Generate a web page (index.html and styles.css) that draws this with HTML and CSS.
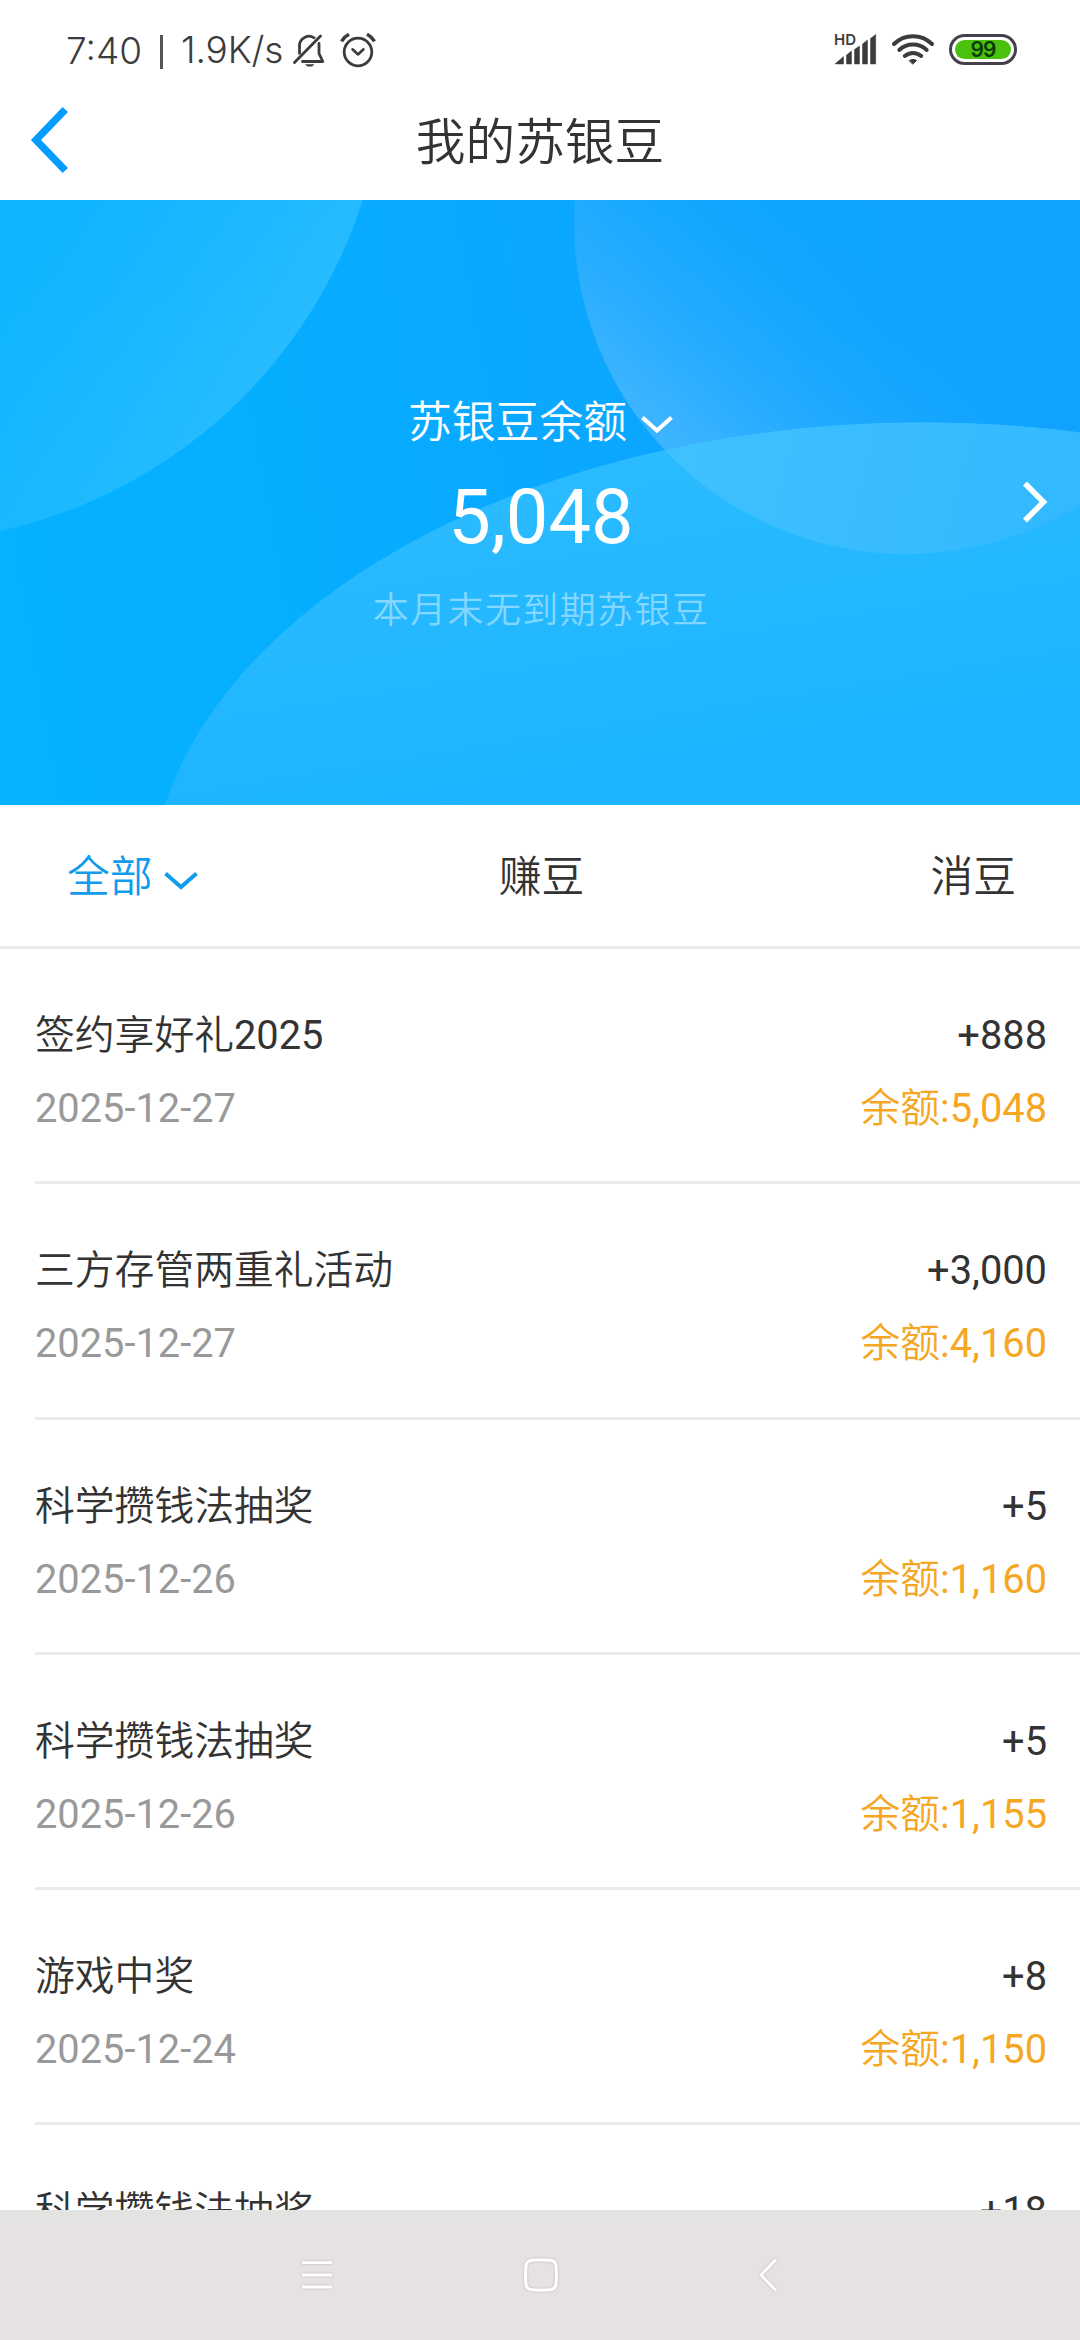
FILE: index.html
```html
<!DOCTYPE html>
<html lang="zh-CN">
<head>
<meta charset="utf-8">
<title>我的苏银豆</title>
<link rel="stylesheet" href="styles.css">
</head>
<body>
<div class="app">
  <div class="status">
    <span class="clock">7:40</span>
    <span class="bar"></span>
    <span class="speed">1.9K/s</span>
    <svg class="icon-bell" width="32" height="34" viewBox="0 0 32 34" fill="none" stroke="#3c3c3c" stroke-width="2.800" stroke-linejoin="round">
      <path d="M6.5 20.5V12.500A9.500 9.500 0 0 1 22 4.500"/>
      <path d="M26 9.500V19.500L29.800 27.500H9.500" stroke-linecap="round"/>
      <path d="M1.500 28.500L27.500 2" stroke-linecap="round"/>
      <path d="M12 30.200H21.500L19 32.500H14.500Z" fill="#3c3c3c" stroke="none"/>
    </svg>
    <svg class="icon-alarm" width="36" height="36" viewBox="0 0 36 36" fill="none" stroke="#3c3c3c">
      <circle cx="18" cy="20" r="13.800" stroke-width="2.800"/>
      <path d="M12.500 17.300L18 22.500L23.500 17.300" stroke-width="2.600" stroke-linecap="round" stroke-linejoin="round"/>
      <path d="M1.500 9.300Q4.500 4.500 9 2.300M34.500 9.300Q31.500 4.500 27 2.300" stroke-width="3.400"/>
    </svg>
    <span class="spacer"></span>
    <svg class="icon-signal" width="43" height="34" viewBox="0 0 43 34" fill="#3c3c3c">
      <text x="0" y="12.500" class="hd">HD</text>
      <path d="M1.500 31.500L9.500 24.500V32H1.500ZM12.500 32V23L17.500 19V32ZM20.500 32V17.500L25.500 14V32ZM28.500 32V12L33.500 8V32ZM36.500 32V6.500L41.700 2.500V32Z" stroke="#3c3c3c" stroke-width=".5"/>
    </svg>
    <svg class="icon-wifi" width="44" height="34" viewBox="0 0 44 34" fill="none" stroke="#3c3c3c" stroke-width="4" stroke-linecap="round">
      <path d="M3 12A27 27 0 0 1 41 12M8.300 18A20 20 0 0 1 35.700 18M13.800 24A12.500 12.500 0 0 1 30.200 24"/>
      <path d="M18.500 28.500Q22 26 25.500 28.500L22 32Z" fill="#3c3c3c" stroke-width="1"/>
    </svg>
    <span class="battery"><span class="charge">99</span></span>
  </div>
  <header class="header">
    <svg class="back" width="40" height="70" viewBox="0 0 40 70" fill="none" stroke="#069bff" stroke-width="7.400">
      <path d="M35.300 4.500L6 35L35.300 65.500"/>
    </svg>
    <h1 class="title">我的苏银豆</h1>
  </header>
  <section class="hero">
    <svg class="hero-bg" width="1080" height="605" viewBox="0 0 1080 605">
      <defs>
        <linearGradient id="base" x1="0" y1="0.450" x2="1" y2="0.350">
          <stop offset="0" stop-color="#05b2ff"/><stop offset="0.300" stop-color="#06adff"/><stop offset="0.500" stop-color="#0aa8ff"/><stop offset="1" stop-color="#10a2ff"/>
        </linearGradient>
        <linearGradient id="left" gradientUnits="userSpaceOnUse" x1="30" y1="40" x2="275" y2="200">
          <stop offset="0" stop-color="#25beff" stop-opacity=".3"/><stop offset="1" stop-color="#2dbeff" stop-opacity=".9"/>
        </linearGradient>
        <linearGradient id="right" gradientUnits="userSpaceOnUse" x1="690" y1="250" x2="860" y2="60">
          <stop offset="0" stop-color="#45b6ff" stop-opacity=".85"/><stop offset="1" stop-color="#1aa5ff" stop-opacity="0.100"/>
        </linearGradient>
        <linearGradient id="over" gradientUnits="userSpaceOnUse" x1="670" y1="250" x2="1040" y2="350">
          <stop offset="0" stop-color="#40c1ff"/><stop offset="1" stop-color="#33b9ff"/>
        </linearGradient>
        <linearGradient id="wave" gradientUnits="userSpaceOnUse" x1="600" y1="240" x2="660" y2="605">
          <stop offset="0" stop-color="#2cbbff"/><stop offset="1" stop-color="#1bb4ff"/>
        </linearGradient>
        <clipPath id="waveClip"><ellipse cx="923" cy="701.500" rx="774" ry="479"/></clipPath>
      </defs>
      <rect width="1080" height="605" fill="url(#base)"/>
      <circle cx="-106" cy="-149.500" r="492" fill="url(#left)"/>
      <circle cx="906" cy="22" r="332" fill="url(#right)"/>
      <ellipse cx="923" cy="701.500" rx="774" ry="479" fill="url(#wave)"/>
      <circle cx="906" cy="22" r="332" fill="url(#over)" clip-path="url(#waveClip)"/>
    </svg>
    <div class="hero-body">
      <div class="label">苏银豆余额<svg class="label-caret" width="32" height="18" viewBox="0 0 32 18" fill="none" stroke="#fff" stroke-width="4"><path d="M1.500 1.500L16 14.500L30.500 1.500"/></svg></div>
      <div class="amount">5,048</div>
      <div class="note">本月末无到期苏银豆</div>
    </div>
    <svg class="more" width="26" height="42" viewBox="0 0 26 42" fill="none" stroke="#fff" stroke-width="5.600"><path d="M3 2.500L21.500 21L3 39.500"/></svg>
  </section>
  <nav class="tabs">
    <span class="tab active">全部<svg class="tab-caret" width="34" height="18" viewBox="0 0 34 18" fill="none" stroke="#119cee" stroke-width="4"><path d="M1.500 1.500L17 15L32.500 1.500"/></svg></span>
    <span class="tab">赚豆</span>
    <span class="tab">消豆</span>
  </nav>
  <main class="list">
    <div class="row"><div><div class="name">签约享好礼<span class="num">2025</span></div><div class="date">2025-12-27</div></div><div class="right"><div class="delta">+888</div><div class="balance">余额<span class="num">:5,048</span></div></div></div>
    <div class="row"><div><div class="name">三方存管两重礼活动</div><div class="date">2025-12-27</div></div><div class="right"><div class="delta">+3,000</div><div class="balance">余额<span class="num">:4,160</span></div></div></div>
    <div class="row"><div><div class="name">科学攒钱法抽奖</div><div class="date">2025-12-26</div></div><div class="right"><div class="delta">+5</div><div class="balance">余额<span class="num">:1,160</span></div></div></div>
    <div class="row"><div><div class="name">科学攒钱法抽奖</div><div class="date">2025-12-26</div></div><div class="right"><div class="delta">+5</div><div class="balance">余额<span class="num">:1,155</span></div></div></div>
    <div class="row"><div><div class="name">游戏中奖</div><div class="date">2025-12-24</div></div><div class="right"><div class="delta">+8</div><div class="balance">余额<span class="num">:1,150</span></div></div></div>
    <div class="row"><div><div class="name">科学攒钱法抽奖</div></div><div class="right"><div class="delta">+18</div></div></div>
  </main>
  <footer class="navbar">
    <svg width="36" height="36" viewBox="0 0 36 36" fill="none" stroke="#fff" stroke-width="2.800"><path d="M3 5.700H33M3 18H33M3 30H33"/></svg>
    <svg width="36" height="36" viewBox="0 0 36 36" fill="none" stroke="#fff" stroke-width="3"><path d="M9 3.200Q18 2.400 27 3.200Q32.600 3.600 33 9Q33.800 18 33 27Q32.600 32.400 27 32.800Q18 33.600 9 32.800Q3.400 32.400 3 27Q2.200 18 3 9Q3.400 3.600 9 3.200Z"/></svg>
    <svg width="36" height="36" viewBox="0 0 36 36" fill="none" stroke="#fff" stroke-width="2.800"><path d="M26 2.500L11 18L26 33.500"/></svg>
  </footer>
</div>
</body>
</html>
```
FILE: styles.css
```css
* { box-sizing: border-box; }
body {
  margin: 0;
  background: #fff;
  color: #333;
  font-family: Roboto, "Noto Sans CJK SC", sans-serif;
  font-weight: 350;
}
svg { display: block; flex: none; }
.app {
  width: 1080px;
  height: 2340px;
  display: flex;
  flex-direction: column;
  overflow: hidden;
}
.status {
  height: 80px;
  flex: none;
  display: flex;
  align-items: flex-start;
  padding: 0 63px 0 66px;
  color: #3c3c3c;
  font-family: Inter, sans-serif;
  font-size: 37px;
  line-height: 44px;
  white-space: nowrap;
}
.clock { width: 94px; margin-top: 29px; }
.bar { width: 3px; height: 34px; margin-top: 35px; background: #555; }
.speed { width: 130px; margin-top: 28px; padding-left: 18px; letter-spacing: -0.100px; }
.icon-bell { margin: 34px 0 0 0; }
.icon-alarm { margin: 32px 0 0 15px; }
.spacer { flex: 1; }
.icon-signal { margin-top: 32px; overflow: visible; }
.hd { font: 600 15px Inter, sans-serif; }
.icon-wifi { margin: 32px 0 0 14px; }
.battery {
  width: 68px;
  height: 31px;
  margin: 34px 0 0 14px;
  padding: 3px;
  border: 3px solid #45404a;
  border-radius: 16px;
}
.charge {
  display: block;
  height: 19px;
  border-radius: 10px;
  background: #4ac10d;
  color: #0b3a06;
  font: 600 21px/19px Inter, sans-serif;
  text-align: center;
  letter-spacing: -1px;
}
.header {
  height: 120px;
  flex: none;
  display: grid;
  grid-template-columns: 140px 1fr 140px;
  align-items: start;
}
.back { margin: 25px 0 0 30px; }
.title {
  margin: 26px 0 0;
  color: #333;
  font-size: 49.700px;
  font-weight: 350;
  line-height: 74px;
  text-align: center;
}
.hero {
  height: 605px;
  flex: none;
  display: grid;
  grid-template-columns: 1fr;
}
.hero > * { grid-area: 1 / 1; }
.hero-body { z-index: 1; color: #fff; text-align: center; }
.label {
  display: flex;
  justify-content: center;
  margin-top: 190px;
  padding-left: 1px;
  font-size: 43.800px;
  line-height: 66px;
}
.label-caret { margin: 26px 0 0 14px; }
.amount { margin-top: 17px; padding-left: 2px; font-size: 75.800px; font-weight: 400; line-height: 90px; }
.note { margin-top: 21px; padding-left: 2px; font-size: 36px; line-height: 54px; letter-spacing: 1.400px; color: rgba(255, 255, 255, .45); }
.more { z-index: 1; justify-self: end; margin: 281px 32px 0 0; }
.tabs {
  height: 144px;
  flex: none;
  display: flex;
  justify-content: space-between;
  padding: 39px 64px 0 67px;
  border-bottom: 3px solid #ebebeb;
  font-size: 42.800px;
  line-height: 66px;
  white-space: nowrap;
}
.tab { width: 133px; display: flex; justify-content: center; }
.tab:first-child { justify-content: flex-start; }
.tab:last-child { justify-content: flex-end; }
.active { color: #119cee; }
.tab-caret { margin: 28px 0 0 11px; }
.list { flex: 1; min-height: 0; overflow: hidden; padding-left: 35px; }
.row {
  height: 235.250px;
  display: flex;
  justify-content: space-between;
  padding: 50px 33px 0 0;
  border-bottom: 3px solid #ebebeb;
  font-size: 39.800px;
  line-height: 73px;
  white-space: nowrap;
}
.right { text-align: right; }
.num, .delta, .date { font-weight: 400; }
.date { color: #999; }
.balance { color: #f5a623; }
.navbar {
  height: 130px;
  flex: none;
  display: flex;
  justify-content: space-between;
  padding: 47px 294px 0 299px;
  background: linear-gradient(#e3e3e1 15px, #e6e2e1 15px);
}
.navbar svg { filter: drop-shadow(0 0 1px rgba(0, 0, 0, .2)); }
.navbar svg:nth-child(2) { margin-right: 4px; }
```
